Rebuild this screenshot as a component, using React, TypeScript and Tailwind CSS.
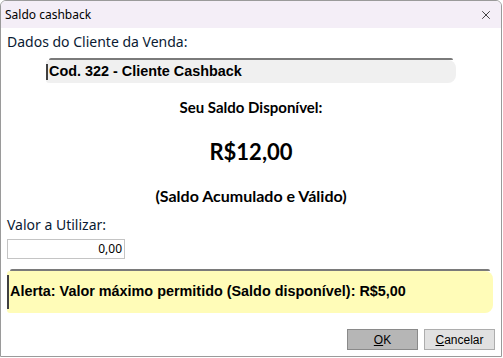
import { X } from "lucide-react";

const ui = { fontFamily: '"Noto Sans", "Open Sans", sans-serif' };
const classic = { fontFamily: '"Liberation Sans", Arial, sans-serif' };
const calibri = { fontFamily: 'Lato, "Noto Sans", sans-serif' };

// Shaded panel with the old-school top rule and dark left edge
const Panel = ({ className, edge, children }: { className: string; edge: string; children: React.ReactNode }) => (
  <div className="flex flex-col">
    <div className="h-[2px] mx-[3px] bg-[#7a7a7a] rounded-t-sm" />
    <div className={`flex items-center rounded-r-lg rounded-l-[3px] ${className}`}>
      <div className={`w-[2px] bg-[#404040] mr-[1px] ${edge}`} />
      {children}
    </div>
  </div>
);

export default function App() {
  return (
    <div className="w-[503px] h-[358px] bg-white">
      <div className="flex flex-col h-[357px] w-[502px] border border-[#9a9a9a] rounded-t-md overflow-hidden bg-white">
        {/* Title bar */}
        <div className="h-[27px] flex items-center justify-between pl-[4px] pr-[8px] bg-[#f4eef7]" style={ui}>
          <span className="text-[12px] text-black">Saldo cashback</span>
          <X className="w-[14px] h-[14px] text-black" strokeWidth={1.25} />
        </div>

        <div className="flex flex-col px-[6px] pt-[4px]">
          <div className="text-[14px] text-[#0a1a33] leading-[20px]" style={ui}>
            Dados do Cliente da Venda:
          </div>

          <div className="mt-[6px] ml-[39px] w-[410px]">
            <Panel className="h-[23px] bg-[#f0f0f0]" edge="h-[16px]">
              <span className="text-[14.4px] font-bold text-black" style={classic}>
                Cod. 322 - Cliente Cashback
              </span>
            </Panel>
          </div>

          <div className="flex flex-col items-center mt-[14px] text-black" style={calibri}>
            <div className="text-[15px] font-bold leading-[20px]">Seu Saldo Disponível:</div>
            <div className="text-[22px] font-bold leading-[30px] mt-[20px]">R$12,00</div>
            <div className="text-[16px] font-bold leading-[20px] mt-[19px]">(Saldo Acumulado e Válido)</div>
          </div>

          <div className="text-[14px] text-[#0a1a33] leading-[20px] mt-[9px]" style={ui}>
            Valor a Utilizar:
          </div>
          <div className="mt-[4px] w-[118px] h-[20px] border border-[#c4c4c4] flex items-center justify-end pr-[2px]">
            <span className="text-[12px] text-black" style={ui}>0,00</span>
          </div>

          <div className="mt-[10px] w-[486px]">
            <Panel className="h-[42px] bg-[#fffcb8]" edge="h-[34px]">
              <span className="text-[14.4px] font-bold text-black" style={classic}>
                Alerta: Valor máximo permitido (Saldo disponível): R$5,00
              </span>
            </Panel>
          </div>

          <div className="flex justify-end gap-[6px] mt-[16px]">
            <button className="w-[71px] h-[21px] bg-[#b6b6b6] border border-[#8a8a8a] text-[12px] text-black" style={classic}>
              <span className="underline">O</span>K
            </button>
            <button className="w-[71px] h-[21px] bg-[#e1e1e1] border border-[#adadad] text-[12px] text-black" style={classic}>
              <span className="underline">C</span>ancelar
            </button>
          </div>
        </div>
      </div>
    </div>
  );
}
